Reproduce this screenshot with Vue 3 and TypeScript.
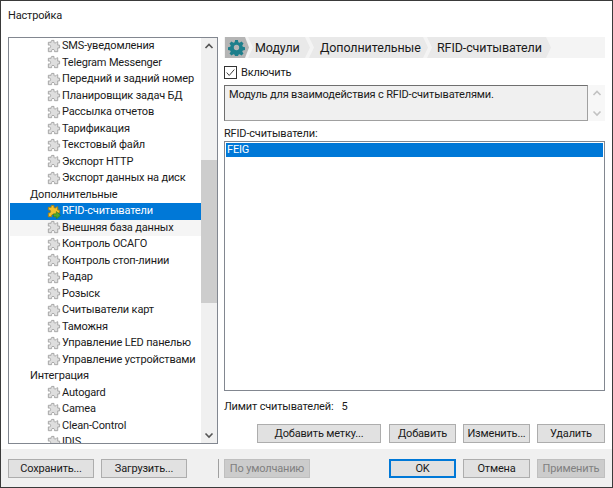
<script setup lang="ts">
interface Row { label: string; group?: boolean; selected?: boolean; hover?: boolean }
const names = (list: string[]): Row[] => list.map((label) => ({ label }))
const rows: Row[] = [
  ...names(['SMS-уведомления', 'Telegram Messenger', 'Передний и задний номер', 'Планировщик задач БД', 'Рассылка отчетов', 'Тарификация', 'Текстовый файл', 'Экспорт HTTP', 'Экспорт данных на диск']),
  { label: 'Дополнительные', group: true },
  { label: 'RFID-считыватели', selected: true },
  { label: 'Внешняя база данных', hover: true },
  ...names(['Контроль ОСАГО', 'Контроль стоп-линии', 'Радар', 'Розыск', 'Считыватели карт', 'Таможня', 'Управление LED панелью', 'Управление устройствами']),
  { label: 'Интеграция', group: true },
  ...names(['Autogard', 'Camea', 'Clean-Control', 'IDIS']),
]
const puzzle = 'M6 1.5 h2.5 v2 c0 1 2.5 1 2.5 0 l0.5 -.5 h1 v3.5 h2 v3 h-2 v4 h-3.5 v-1.5 c0 -1.2 -3 -1.2 -3 0 v1.5 h-3.5 v-4 h1.5 c1.2 0 1.2 -3 0 -3 h-1.5 v-3 h3 v-1 z'
</script>

<template>
  <div class="dialog">
    <div class="title">Настройка</div>
    <div class="main">
      <div class="tree">
        <div class="tree-list">
          <div
            v-for="row in rows"
            :key="row.label"
            class="row"
            :class="{ group: row.group, selected: row.selected, hover: row.hover }"
          >
            <svg v-if="!row.group" class="puzzle" viewBox="0 0 16 16" width="15" height="15">
              <path :d="puzzle" :fill="row.selected ? '#f2c230' : '#dedede'" :stroke="row.selected ? '#a87f10' : '#a3a3a3'" stroke-width="1" />
              <path v-if="row.selected" d="M8 10.5 h3 v-2.5 l4.5 4 l-4.5 4 v-2.5 h-3 z" fill="#4fa82e" stroke="#2c7a18" stroke-width=".6" />
            </svg>
            <span>{{ row.label }}</span>
          </div>
        </div>
        <div class="vbar">
          <svg class="arrow" viewBox="0 0 16 16" width="16" height="16"><path d="M4.5 10 L8 6.5 L11.5 10" fill="none" stroke="#555" stroke-width="1.6" /></svg>
          <div class="track"><div class="thumb"></div></div>
          <svg class="arrow" viewBox="0 0 16 16" width="16" height="16"><path d="M4.5 6.5 L8 10 L11.5 6.5" fill="none" stroke="#555" stroke-width="1.6" /></svg>
        </div>
      </div>

      <div class="pane">
        <div class="crumbs">
          <div class="gear">
            <svg viewBox="0 0 24 24" width="17" height="17">
              <path fill="#1d7f8c" fill-rule="evenodd" d="M10 1.5h4l.6 3.1 1.8.8 2.7-1.8 2.8 2.8-1.8 2.7.8 1.8 3.1.6v4l-3.1.6-.8 1.8 1.8 2.7-2.8 2.8-2.7-1.8-1.8.8-.6 3.1h-4l-.6-3.1-1.8-.8-2.7 1.8-2.8-2.8 1.8-2.7-.8-1.8-3.1-.6v-4l3.1-.6.8-1.8-1.8-2.7 2.8-2.8 2.7 1.8 1.8-.8zM12 8.2a3.8 3.8 0 1 0 0 7.6 3.8 3.8 0 0 0 0-7.6z" />
            </svg>
          </div>
          <div class="crumb c1">Модули</div>
          <div class="crumb c2">Дополнительные</div>
          <div class="crumb c3">RFID-считыватели</div>
        </div>

        <label class="check">
          <span class="box">
            <svg viewBox="0 0 13 13" width="11" height="11"><path d="M2 6.5 L5 10 L11 3" fill="none" stroke="#333" stroke-width="1.1" /></svg>
          </span>
          Включить
        </label>

        <div class="desc-row">
          <div class="desc">Модуль для взаимодействия с RFID-считывателями.</div>
          <div class="desc-bar">
            <svg viewBox="0 0 16 16" width="16" height="16"><path d="M4.5 10 L8 6.5 L11.5 10" fill="none" stroke="#c2c2c2" stroke-width="1.6" /></svg>
            <svg viewBox="0 0 16 16" width="16" height="16"><path d="M4.5 6.5 L8 10 L11.5 6.5" fill="none" stroke="#c2c2c2" stroke-width="1.6" /></svg>
          </div>
        </div>

        <div class="list-label">RFID-считыватели:</div>
        <div class="list"><div class="list-item">FEIG</div></div>

        <div class="limit"><span>Лимит считывателей:</span><span>5</span></div>

        <div class="actions">
          <button class="btn wide">Добавить метку...</button>
          <button class="btn std">Добавить</button>
          <button class="btn std">Изменить...</button>
          <button class="btn last">Удалить</button>
        </div>
      </div>
    </div>

    <div class="footer">
      <button class="btn file">Сохранить...</button>
      <button class="btn file">Загрузить...</button>
      <div class="sep"></div>
      <button class="btn file disabled">По умолчанию</button>
      <div class="spacer"></div>
      <button class="btn std default">OK</button>
      <button class="btn std">Отмена</button>
      <button class="btn last disabled">Применить</button>
    </div>
  </div>
</template>

<style>
html, body { margin: 0; padding: 0; background: #fff; }
</style>

<style scoped>
.dialog {
  width: 613px;
  height: 488px;
  box-sizing: border-box;
  border: 1px solid #3a3a3a;
  display: flex;
  flex-direction: column;
  background: #fff;
  font-family: Roboto, "Noto Sans", sans-serif;
  font-size: 11px;
  letter-spacing: -0.17px;
  color: #1a1a1a;
  overflow: hidden;
}
.title { height: 29px; padding: 8px 0 0 7px; box-sizing: border-box; font-size: 11px; line-height: 14px; }
.main { height: 419px; display: flex; padding: 7px 7px 0 7px; box-sizing: border-box; gap: 6px; }
.tree {
  width: 210px; height: 407px; box-sizing: border-box; border: 1px solid #828790;
  display: flex; overflow: hidden;
}
.tree-list { flex: 1; overflow: hidden; }
.row { height: 16.5px; line-height: 16.5px; display: flex; align-items: center; padding-left: 36px; white-space: nowrap; margin-left: 1px; }
.row.group { padding-left: 20px; }
.row.selected { background: #0078d7; color: #fff; }
.row.hover { background: #f5f5f5; }
.puzzle { flex: none; margin-right: 1px; }
.vbar { width: 16px; background: #f0f0f0; display: flex; flex-direction: column; }
.arrow { flex: none; }
.track { flex: 1; padding-top: 106px; }
.thumb { height: 143px; background: #cdcdcd; }
.pane { flex: 1; display: flex; flex-direction: column; min-width: 0; }
.crumbs { height: 21px; background: #f4f4f4; display: flex; font-size: 12.5px; letter-spacing: -0.1px; line-height: 21px; }
.gear {
  width: 24px; margin-left: 1px; background: #b5b5b5; display: flex; align-items: center; padding-left: 3px; box-sizing: border-box;
  clip-path: polygon(0 0, 20px 0, 24px 50%, 20px 100%, 0 100%);
}
.crumb { background: #e9e9e9; white-space: nowrap; box-sizing: border-box; clip-path: polygon(0 0, calc(100% - 5px) 0, 100% 50%, calc(100% - 5px) 100%, 0 100%, 5px 50%); }
.c1 { width: 62px; padding-left: 7px; margin-left: -1px; }
.c2 { width: 119px; padding-left: 11px; margin-left: -1px; }
.c3 { width: 124px; padding-left: 10px; margin-left: -1px; }
.check { display: flex; align-items: center; margin-top: 8px; height: 13px; gap: 4px; }
.box { width: 13px; height: 13px; box-sizing: border-box; border: 1px solid #333; display: flex; align-items: center; justify-content: center; }
.box svg { flex: none; }
.desc-row { display: flex; margin-top: 6px; height: 36px; }
.desc { flex: 1; background: #f0f0f0; border: 1px solid #6f6f6f; border-right-color: #a0a0a0; border-bottom-color: #a0a0a0; box-sizing: border-box; padding: 1px 4px 0; line-height: 15px; }
.desc-bar { width: 17px; display: flex; flex-direction: column; justify-content: space-between; align-items: flex-end; background: #f7f7f7; }
.list-label { margin-top: 5px; height: 15px; line-height: 15px; }
.list { height: 250px; box-sizing: border-box; border: 1px solid #828790; padding: 1px; }
.list-item { background: #0078d7; color: #fff; height: 14px; line-height: 14px; padding-left: 1px; }
.limit { margin-top: 8px; height: 16px; line-height: 16px; display: flex; gap: 8px; }
.actions { display: flex; justify-content: flex-end; gap: 7px; margin-top: 9px; }
.btn {
  height: 19px; padding: 0; box-sizing: border-box; background: #e1e1e1; border: 1px solid #adadad;
  font: inherit; letter-spacing: inherit; color: #1a1a1a; line-height: 16px; white-space: nowrap;
}
.wide { width: 124px; margin-right: 1px; }
.std { width: 67px; }
.last { width: 68px; }
.footer { flex: 1; background: #f0f0f0; display: flex; align-items: flex-start; padding: 10px 7px 0 7px; gap: 7px; box-sizing: border-box; }
.file { width: 86px; }
.sep { width: 1px; height: 19px; background: #a0a0a0; margin: 0 -2px 0 24px; }
.spacer { flex: 1; }
.disabled { background: #cccccc; border-color: #bfbfbf; color: #808080; }
.default { border: 2px solid #0078d7; line-height: 14px; }
</style>
